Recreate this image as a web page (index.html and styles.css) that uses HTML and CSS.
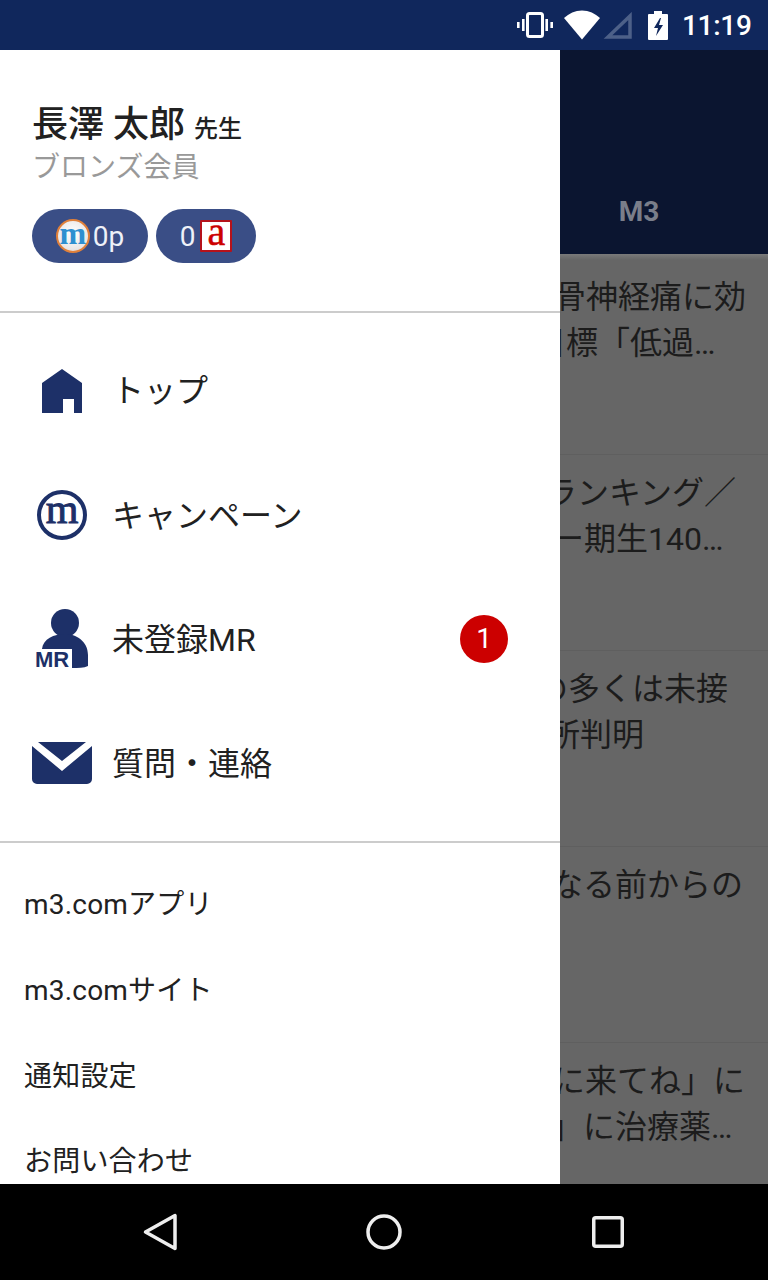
FILE: index.html
```html
<!DOCTYPE html>
<html>
<head>
	<meta charset="utf-8">
	<title>m3.com</title>
	<link rel="stylesheet" href="styles.css">
</head>
<body>
	<div id="status">
		<svg class="st-vibrate" width="36" height="26" viewBox="0 0 36 26">
			<rect x="10.5" y="1.5" width="15" height="23" rx="2" fill="none" stroke="#fff" stroke-width="3"/>
			<path d="M5 7h2.6v12H5zM0 10h2.6v6H0zM28.400 7H31v12h-2.600zM33.400 10H36v6h-2.600z" fill="#fff"/>
		</svg>
		<svg class="st-wifi" width="36" height="30" viewBox="0 0 36 30">
			<path d="M18 29.500L0 8C5 3.500 11 .5 18 .5S31 3.500 36 8z" fill="#fff"/>
		</svg>
		<svg class="st-signal" width="29" height="27" viewBox="0 0 29 27">
			<path d="M27 4v21H5z" fill="none" stroke="#4d6088" stroke-width="3.500"/>
		</svg>
		<svg class="st-battery" width="20" height="29" viewBox="0 0 20 29">
			<path d="M6 0h8v3h5a1 1 0 0 1 1 1v24a1 1 0 0 1-1 1H1a1 1 0 0 1-1-1V4a1 1 0 0 1 1-1h5z" fill="#fff"/>
			<path d="M12 7l-6 10h4l-2 8 7-11h-4l2-7z" fill="#10275c"/>
		</svg>
		<span class="st-time">11:19</span>
	</div>

	<div id="main">
		<div id="drawer">
			<div class="profile">
				<div class="name">長澤 太郎 <small>先生</small></div>
				<div class="rank">ブロンズ会員</div>
				<div class="pills">
					<div class="pill pill-point">
						<span class="coin">m</span>
						<span>0p</span>
					</div>
					<div class="pill pill-answer">
						<span>0</span>
						<span class="a-box">a</span>
					</div>
				</div>
			</div>

			<ul class="menu">
				<li>
					<span class="ico">
						<svg class="ico-home" width="40" height="44" viewBox="0 0 40 44">
							<path d="M20 0L40 14V44H32V30H21V44H0V14z" fill="#1d3068"/>
						</svg>
					</span>
					<span class="label">トップ</span>
				</li>
				<li>
					<span class="ico"><span class="m-mark">m</span></span>
					<span class="label">キャンペーン</span>
				</li>
				<li>
					<span class="ico ico-mr">
						<svg width="60" height="62" viewBox="0 0 60 62">
							<circle cx="33" cy="15" r="14" fill="#1d3068"/>
							<path d="M10 41C11 31 22 26 33 26S56 33 56 47V58C52 60 46 60 40 60V41z" fill="#1d3068"/>
						</svg>
						<span class="mr-mark">MR</span>
					</span>
					<span class="label">未登録MR</span>
					<span class="badge">1</span>
				</li>
				<li>
					<span class="ico">
						<svg width="60" height="42" viewBox="0 0 60 42">
							<path d="M6 0H54L30 19zM0 4L30 29 60 4V37a5 5 0 0 1-5 5H5a5 5 0 0 1-5-5z" fill="#1d3068"/>
						</svg>
					</span>
					<span class="label">質問・連絡</span>
				</li>
			</ul>

			<ul class="links">
				<li>m3.comアプリ</li>
				<li>m3.comサイト</li>
				<li>通知設定</li>
				<li>お問い合わせ</li>
			</ul>
		</div>

		<div id="behind">
			<div class="app-head"><span class="tab">M3</span></div>
			<div class="item">
				<p class="l1">骨神経痛に効</p>
				<p class="l2">目標「低過…</p>
			</div>
			<div class="item">
				<p class="l3">ランキング／</p>
				<p class="l4">ー期生140…</p>
			</div>
			<div class="item">
				<p class="l5">の多くは未接</p>
				<p class="l6">所判明</p>
			</div>
			<div class="item">
				<p class="l7">なる前からの</p>
			</div>
			<div class="item">
				<p class="l8">に来てね」に</p>
				<p class="l9">」に治療薬…</p>
			</div>
		</div>
	</div>

	<div id="nav">
		<svg width="34" height="38" viewBox="0 0 34 38">
			<path d="M32 2.500V35.500L2.500 19z" fill="none" stroke="#eee" stroke-width="3.500" stroke-linejoin="round"/>
		</svg>
		<svg width="37" height="36" viewBox="0 0 37 36">
			<circle cx="18" cy="18" r="16" fill="none" stroke="#eee" stroke-width="3.500"/>
		</svg>
		<svg width="32" height="32" viewBox="0 0 32 32">
			<rect x="1.750" y="1.750" width="28.500" height="28.500" rx="2" fill="none" stroke="#eee" stroke-width="3.500"/>
		</svg>
	</div>
</body>
</html>
```

FILE: styles.css
```css
*{
	margin:0;
	padding:0;
	box-sizing:border-box;
}
body{
	width:768px;
	height:1280px;
	overflow:hidden;
	background:#000;
	font-family:"Roboto","Noto Sans CJK JP",sans-serif;
	color:#212121;
}
ul{
	list-style:none;
}

/* status bar */
#status{
	display:flex;
	align-items:center;
	height:50px;
	padding-left:517px;
	background:#10275c;
}
.st-wifi{
	margin-left:11px;
}
.st-signal{
	margin-left:3px;
}
.st-battery{
	margin-left:16px;
}
.st-time{
	margin-left:14px;
	color:#fff;
	font-size:28px;
	font-weight:500;
	letter-spacing:-0.3px;
}

#main{
	display:flex;
	height:1134px;
	overflow:hidden;
}

/* drawer */
#drawer{
	flex:0 0 560px;
	height:1134px;
	overflow:hidden;
	background:#fff;
}
.profile{
	height:263px;
	padding:52px 0 0 32px;
	border-bottom:2px solid #ccc;
}
.name{
	height:46px;
	font-size:36px;
	font-weight:500;
	line-height:46px;
}
.name small{
	font-size:24px;
}
.rank{
	height:40px;
	font-size:28px;
	line-height:40px;
	color:#999;
}
.pills{
	display:flex;
	gap:8px;
	margin-top:21px;
}
.pill{
	display:flex;
	align-items:center;
	justify-content:center;
	height:54px;
	border-radius:27px;
	background:#3a4e86;
	color:#eef1f8;
	font-size:28px;
}
.pill-point{
	width:116px;
	gap:3px;
}
.pill-answer{
	width:100px;
	gap:5px;
}
.coin{
	width:34px;
	height:34px;
	border:2px solid #e0803a;
	border-radius:50%;
	background:radial-gradient(circle at 50% 40%,#fff,#e9e6e6 70%,#c9b0a0);
	color:#2e8fd0;
	font-family:"Liberation Serif",serif;
	font-size:32px;
	font-weight:700;
	line-height:24px;
	text-align:center;
}
.a-box{
	width:32px;
	height:32px;
	border:2px solid #b5121b;
	border-radius:1px;
	background:#fff;
	color:#c00;
	font-family:"Liberation Serif",serif;
	font-size:40px;
	-webkit-text-stroke:0.5px #c00;
	line-height:20px;
	text-align:center;
}

.menu{
	height:530px;
	padding:15px 52px 0 32px;
	border-bottom:2px solid #ccc;
}
.menu li{
	display:flex;
	align-items:center;
	height:124.4px;
}
.ico{
	display:flex;
	justify-content:center;
	flex:0 0 60px;
	margin-right:20px;
}
.ico-home{
	margin-top:1px;
}
.label{
	flex:1;
	padding-bottom:4px;
	font-size:32px;
}
.m-mark{
	width:50px;
	height:50px;
	border:4px solid #1d3068;
	border-radius:50%;
	color:#1d3068;
	font-family:"Liberation Serif",serif;
	font-size:42px;
	-webkit-text-stroke:1px #1d3068;
	line-height:31px;
	text-align:center;
}
.ico-mr{
	position:relative;
}
.mr-mark{
	position:absolute;
	left:3px;
	bottom:-3px;
	color:#1d3068;
	font-family:"Liberation Sans",sans-serif;
	font-size:22px;
	font-weight:700;
	line-height:26px;
}
.badge{
	width:48px;
	height:48px;
	border-radius:50%;
	background:#c00;
	color:#fff;
	font-size:28px;
	line-height:48px;
	text-align:center;
}

.links{
	padding:19px 0 0 24px;
}
.links li{
	height:85.800px;
	font-size:28px;
	letter-spacing:0.2px;
	line-height:86px;
}

/* app behind the drawer */
#behind{
	flex:1;
	min-width:0;
	overflow:hidden;
	background:#666;
}
.app-head{
	height:204px;
	padding:145px 50px 0 0;
	background:#0b1530;
	text-align:center;
}
.tab{
	color:#7a7e8a;
	font-size:28px;
	font-weight:700;
	line-height:34px;
}
.item{
	height:196px;
	padding-top:15px;
	border-bottom:1px solid #5f5f5f;
	font-size:32px;
	line-height:46px;
	color:#1c1c1c;
	white-space:nowrap;
}
.item:nth-child(2){
	height:201px;
	padding-top:20px;
	background:linear-gradient(#7a7a7a,#666 6px);
}
.l1{ margin-left:-6px; }
.l2{ margin-left:-26px; }
.l3{ margin-left:-15px; }
.l4{ margin-left:-8px; }
.l5{ margin-left:-24px; }
.l6{ margin-left:-12px; }
.l7{ margin-left:-9px; }
.l8{ margin-left:-7px; }
.l9{ margin-left:-9px; }

/* nav bar */
#nav{
	display:flex;
	align-items:center;
	gap:189px;
	height:96px;
	padding-left:143px;
	background:#000;
}
```
